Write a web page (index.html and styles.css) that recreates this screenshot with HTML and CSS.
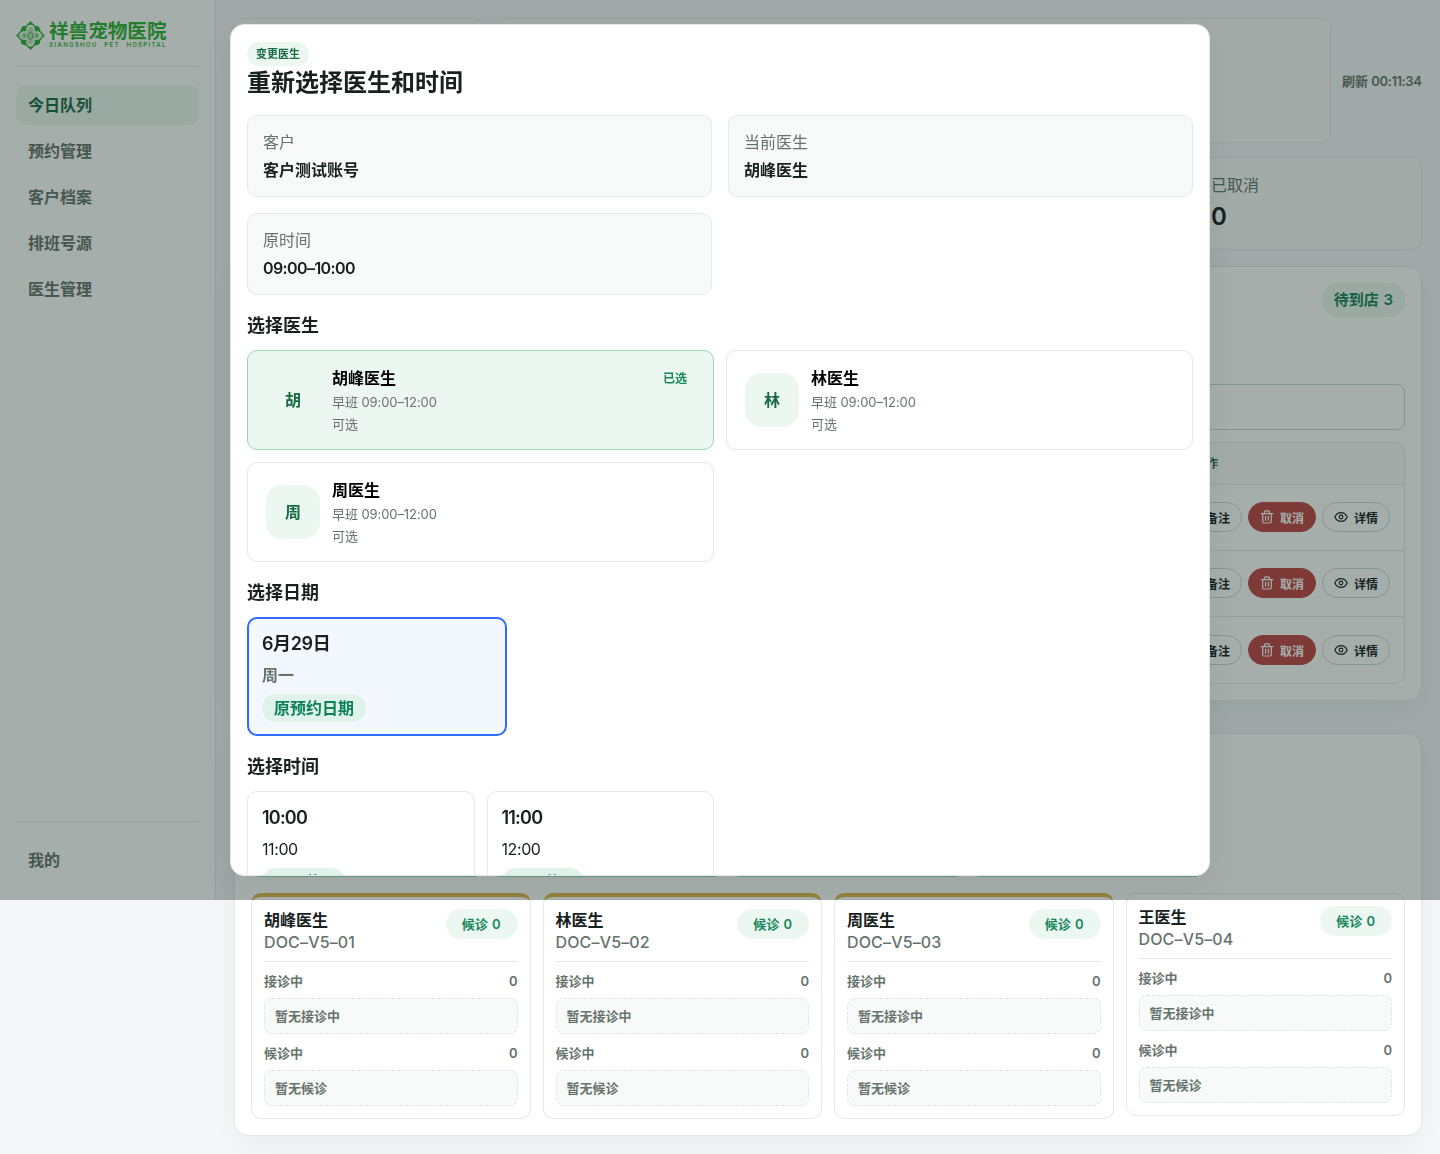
FILE: index.html
```html
<!DOCTYPE html>
<html lang="zh-CN">
<head>
    <meta charset="UTF-8">
    <meta name="viewport" content="width=device-width, initial-scale=1.0">
    <title>今日队列</title>
    <link rel="stylesheet" href="styles.css">
</head>
<body>
    <!-- Shared icons -->
    <svg class="icon-defs" width="0" height="0">
        <symbol id="icon-trash" viewBox="0 0 14 14">
            <path d="M1.200 3.600h11.600M4.500 3.400V1.900a1 1 0 0 1 1-1h3a1 1 0 0 1 1 1v1.500M2.700 3.800v7.700a1.500 1.500 0 0 0 1.500 1.500h5.600a1.500 1.500 0 0 0 1.500-1.500V3.800M5.600 6.200v4M8.400 6.200v4"/>
        </symbol>
        <symbol id="icon-eye" viewBox="0 0 14 14">
            <path d="M.9 7C2 4.200 4.200 2.600 7 2.600S12 4.200 13.100 7C12 9.800 9.800 11.400 7 11.400S2 9.800.9 7z"/>
            <circle cx="7" cy="7" r="1.800"/>
        </symbol>
    </svg>

    <div class="app">
        <aside class="sidebar">
            <div class="brand">
                <svg class="brand-mark" viewBox="0 0 28 28">
                    <path d="M14 0 L18.500 4.500 Q23.500 4.500 23.500 9.500 L28 14 L23.500 18.500 Q23.500 23.500 18.500 23.500 L14 28 L9.500 23.500 Q4.500 23.500 4.500 18.500 L0 14 L4.500 9.500 Q4.500 4.500 9.500 4.500 Z" fill="#2eb135"/>
                    <path d="M10 10V7.500a4 4 0 0 1 8 0V10h2.500a4 4 0 0 1 0 8H18v2.500a4 4 0 0 1-8 0V18H7.500a4 4 0 0 1 0-8z" fill="#fff"/>
                    <path d="M11.200 11.200V8a2.800 2.800 0 0 1 5.600 0v3.200H20a2.800 2.800 0 0 1 0 5.600h-3.200V20a2.800 2.800 0 0 1-5.600 0v-3.200H8a2.800 2.800 0 0 1 0-5.600z" fill="#b9dfbb"/>
                    <path d="M14 10.500c-2.800 2-2.800 5.500 0 7.500 2.800-2 2.800-5.500 0-7.500zM8 12.500v3M20 12.500v3" fill="none" stroke="#2eb135" stroke-width=".9"/>
                    <path d="M3.500 12l-1.500 2 1.500 2M24.500 12l1.500 2-1.500 2" fill="none" stroke="#fff" stroke-width=".6"/>
                </svg>
                <div class="brand-text">
                    <div class="brand-name">祥兽宠物医院</div>
                    <div class="brand-sub">XIANGSHOU PET HOSPITAL</div>
                </div>
            </div>
            <nav class="nav">
                <a class="nav-item active">今日队列</a>
                <a class="nav-item">预约管理</a>
                <a class="nav-item">客户档案</a>
                <a class="nav-item">排班号源</a>
                <a class="nav-item">医生管理</a>
            </nav>
            <div class="sidebar-footer">
                <a class="nav-item">我的</a>
            </div>
        </aside>

        <main class="main">
            <div class="topbar">
                <div class="top-card top-title"></div>
                <div class="top-card top-info"></div>
                <div class="refresh">刷新 <span>00:11:34</span></div>
            </div>

            <div class="stats">
                <div class="stat"></div>
                <div class="stat"></div>
                <div class="stat"></div>
                <div class="stat"></div>
                <div class="stat">
                    <span>已取消</span>
                    <strong>0</strong>
                </div>
            </div>

            <section class="panel queue-panel">
                <div class="panel-head">
                    <span class="pill">待到店 3</span>
                </div>
                <div class="search"></div>
                <div class="table">
                    <div class="table-head">操作</div>
                    <div class="table-row">
                        <button class="btn">备注</button>
                        <button class="btn danger"><svg><use href="#icon-trash"/></svg>取消</button>
                        <button class="btn"><svg><use href="#icon-eye"/></svg>详情</button>
                    </div>
                    <div class="table-row">
                        <button class="btn">备注</button>
                        <button class="btn danger"><svg><use href="#icon-trash"/></svg>取消</button>
                        <button class="btn"><svg><use href="#icon-eye"/></svg>详情</button>
                    </div>
                    <div class="table-row">
                        <button class="btn">备注</button>
                        <button class="btn danger"><svg><use href="#icon-trash"/></svg>取消</button>
                        <button class="btn"><svg><use href="#icon-eye"/></svg>详情</button>
                    </div>
                </div>
            </section>

            <section class="panel doctor-panel">
                <div class="doctor-grid" id="doctor-grid"></div>
            </section>
        </main>
    </div>

    <!-- Change doctor dialog -->
    <div class="overlay">
        <div class="modal">
            <span class="tag">变更医生</span>
            <h2>重新选择医生和时间</h2>
            <div class="info-grid">
                <div class="info"><span>客户</span><strong>客户测试账号</strong></div>
                <div class="info"><span>当前医生</span><strong>胡峰医生</strong></div>
                <div class="info"><span>原时间</span><strong class="time">09:00–10:00</strong></div>
            </div>

            <h3>选择医生</h3>
            <div class="choice-grid">
                <div class="choice selected">
                    <div class="avatar">胡</div>
                    <div class="choice-text">
                        <strong>胡峰医生</strong>
                        <span>早班 09:00–12:00</span>
                        <span>可选</span>
                    </div>
                    <div class="chosen">已选</div>
                </div>
                <div class="choice">
                    <div class="avatar">林</div>
                    <div class="choice-text">
                        <strong>林医生</strong>
                        <span>早班 09:00–12:00</span>
                        <span>可选</span>
                    </div>
                </div>
                <div class="choice">
                    <div class="avatar">周</div>
                    <div class="choice-text">
                        <strong>周医生</strong>
                        <span>早班 09:00–12:00</span>
                        <span>可选</span>
                    </div>
                </div>
            </div>

            <h3>选择日期</h3>
            <div class="date-card">
                <strong>6月29日</strong>
                <span class="weekday">周一</span>
                <span class="badge">原预约日期</span>
            </div>

            <h3>选择时间</h3>
            <div class="slot-grid">
                <div class="slot">
                    <strong>10:00</strong>
                    <span>11:00</span>
                    <span class="badge">可预约 1</span>
                </div>
                <div class="slot">
                    <strong>11:00</strong>
                    <span>12:00</span>
                    <span class="badge">可预约 1</span>
                </div>
            </div>
        </div>
        <div class="modal-edge"><i></i><i></i><i></i><i></i></div>
    </div>

    <script>
        const doctorGrid = document.getElementById('doctor-grid');

        const doctors = [
            { name: '胡峰医生', code: 'DOC–V5–01', onDuty: true },
            { name: '林医生', code: 'DOC–V5–02', onDuty: true },
            { name: '周医生', code: 'DOC–V5–03', onDuty: true },
            { name: '王医生', code: 'DOC–V5–04', onDuty: false }
        ];

        doctors.forEach((doctor) => {
            const card = document.createElement('div');
            card.classList.add('doctor-card');
            if (doctor.onDuty) {
                card.classList.add('on-duty');
            }
            card.innerHTML = `
                <div class="doctor-head">
                    <div class="doctor-name">
                        <strong>${doctor.name}</strong>
                        <span>${doctor.code}</span>
                    </div>
                    <span class="waiting">候诊 0</span>
                </div>
                <div class="count-row"><span>接诊中</span><span>0</span></div>
                <div class="empty">暂无接诊中</div>
                <div class="count-row"><span>候诊中</span><span>0</span></div>
                <div class="empty">暂无候诊</div>
            `;
            doctorGrid.appendChild(card);
        });
    </script>
</body>
</html>
```

FILE: styles.css
```css
* {
    box-sizing: border-box;
}
body {
    margin: 0;
    height: 1154px;
    overflow: hidden;
    background: #f5f7f9;
    color: #17211d;
    font-family: Inter, "Noto Sans CJK SC", sans-serif;
    font-size: 16px;
    line-height: 22px;
}
strong {
    font-weight: 600;
}
.icon-defs {
    position: absolute;
}
.app {
    display: flex;
    align-items: flex-start;
}

/* Sidebar */
.sidebar {
    width: 216px;
    height: 900px;
    flex: none;
    padding: 18px 16px 20px;
    background: #fff;
    border-right: 1px solid #e4e8e6;
    display: flex;
    flex-direction: column;
}
.brand {
    display: flex;
    gap: 4px;
    height: 49px;
    padding-top: 3px;
    border-bottom: 1px solid #e4e8e6;
    color: #2eb135;
}
.brand-mark {
    width: 29px;
    height: 29px;
}
.brand-name {
    font-size: 19.6px;
    line-height: 20px;
    font-weight: 600;
    white-space: nowrap;
}
.brand-sub {
    font-size: 6px;
    line-height: 7px;
    font-weight: 600;
    letter-spacing: 1.3px;
    word-spacing: 4px;
    white-space: nowrap;
}
.nav {
    display: flex;
    flex-direction: column;
    gap: 6px;
    margin-top: 18px;
}
.nav-item {
    height: 40px;
    padding: 0 12px;
    border-radius: 10px;
    line-height: 40px;
    font-weight: 600;
    color: #66736d;
}
.nav-item.active {
    background: #edf7f2;
    color: #166b43;
}
.sidebar-footer {
    display: flex;
    flex-direction: column;
    margin-top: auto;
    padding-top: 18px;
    border-top: 1px solid #e4e8e6;
}

/* Main page */
.main {
    flex: 1;
    padding: 18px 18px 0;
}
.topbar {
    display: flex;
    align-items: center;
}
.top-card {
    height: 125px;
    background: #f8faf9;
    border: 1px solid #e4e8e6;
    border-radius: 10px;
}
.top-title {
    width: 249px;
}
.top-info {
    flex: 1;
    margin-left: 14px;
}
.refresh {
    width: 80px;
    margin-left: 11px;
    font-size: 13px;
    font-weight: 600;
    white-space: nowrap;
    color: #66736d;
}
.refresh span {
    letter-spacing: -0.4px;
}
.stats {
    display: grid;
    grid-template-columns: repeat(5, 1fr);
    gap: 12px;
    margin-top: 14px;
}
.stat {
    height: 93px;
    padding: 16px;
    background: #f8faf9;
    border: 1px solid #e4e8e6;
    border-radius: 10px;
    display: flex;
    flex-direction: column;
    gap: 6px;
    color: #66736d;
}
.stat strong {
    font-size: 24px;
    line-height: 30px;
    color: #17211d;
}
.panel {
    background: #fff;
    border: 1px solid #e4e8e6;
    border-radius: 14px;
    padding: 16px;
    box-shadow: 0 10px 30px rgba(20, 40, 30, 0.05);
}
.queue-panel {
    margin-top: 16px;
    height: 435px;
}
.panel-head {
    display: flex;
    justify-content: flex-end;
    align-items: flex-start;
    height: 101px;
}
.pill {
    padding: 0 12px;
    border-radius: 17px;
    background: #edf7f2;
    color: #16875a;
    font-size: 15px;
    line-height: 34px;
    font-weight: 600;
    word-spacing: 1px;
}
.search {
    height: 46px;
    border: 1px solid #cbd5d0;
    border-radius: 8px;
}
.table {
    margin-top: 12px;
    border: 1px solid #e4e8e6;
    border-radius: 10px;
    overflow: hidden;
}
.table-head {
    height: 41px;
    padding-right: 186px;
    background: #f8faf9;
    font-size: 12px;
    line-height: 41px;
    font-weight: 600;
    text-align: right;
    color: #355f50;
}
.table-row {
    display: flex;
    justify-content: flex-end;
    align-items: center;
    gap: 6px;
    height: 66px;
    padding: 0 14px 1px 0;
    border-top: 1px solid #e4e8e6;
}
.table-row:last-child {
    height: 67px;
    padding-bottom: 0;
}
.btn {
    display: flex;
    align-items: center;
    gap: 6px;
    height: 30px;
    padding: 0 11px;
    border: 1px solid #cbd5d0;
    border-radius: 15px;
    background: #fff;
    color: #17211d;
    font-family: inherit;
    font-size: 12px;
    font-weight: 700;
}
.btn.danger {
    background: #bd4545;
    border-color: #bd4545;
    color: #fff;
}
.btn svg {
    width: 14px;
    height: 14px;
    fill: none;
    stroke: currentColor;
    stroke-width: 1.2;
    stroke-linecap: round;
    stroke-linejoin: round;
}

/* Doctor board */
.doctor-panel {
    margin-top: 32px;
    height: 403px;
    padding-top: 159px;
}
.doctor-grid {
    display: grid;
    grid-template-columns: repeat(4, 1fr);
    align-items: start;
    gap: 12px;
}
.doctor-card {
    padding: 12px;
    border: 1px solid #e4e8e6;
    border-radius: 10px;
}
.doctor-card.on-duty {
    border-top: 4px solid #e0b64f;
}
.doctor-head {
    display: flex;
    justify-content: space-between;
    align-items: flex-start;
    padding-bottom: 8px;
    border-bottom: 1px solid #e4e8e6;
}
.doctor-name {
    display: flex;
    flex-direction: column;
}
.doctor-name span {
    font-weight: 500;
    letter-spacing: 0.15px;
    color: #66736d;
}
.waiting {
    padding: 0 17px 0 16px;
    border-radius: 15px;
    background: #edf7f2;
    color: #16875a;
    font-size: 13px;
    line-height: 30px;
    font-weight: 600;
    word-spacing: 1px;
}
.count-row {
    display: flex;
    justify-content: space-between;
    margin: 9px 0 7px;
    font-size: 13px;
    line-height: 20px;
    font-weight: 600;
    color: #66736d;
}
.empty {
    height: 36px;
    padding: 0 10px;
    border: 1px dashed #dfe6e2;
    border-radius: 8px;
    background: #f8faf9;
    font-size: 13px;
    line-height: 34px;
    font-weight: 600;
    color: #66736d;
}

/* Dialog */
.overlay {
    position: fixed;
    top: 0;
    left: 0;
    width: 100%;
    height: 900px;
    overflow: hidden;
    padding-top: 24px;
    background: rgba(20, 42, 34, 0.38);
    display: flex;
    flex-direction: column;
    align-items: center;
}
.modal {
    width: 980px;
    height: 852px;
    flex: none;
    overflow: hidden;
    padding: 17px 16px 0;
    background: #fff;
    border: 1px solid #e4e8e6;
    border-radius: 14px;
    box-shadow: 0 10px 30px rgba(20, 40, 30, 0.06);
}
.modal-edge {
    display: grid;
    grid-template-columns: repeat(4, 1fr);
    gap: 20px;
    width: 940px;
    margin-left: 14px;
}
.modal-edge i {
    height: 1px;
    background: #639581;
}
.tag {
    display: block;
    width: 62px;
    border-radius: 12px;
    background: #edf7f2;
    color: #166b43;
    font-size: 11px;
    line-height: 24px;
    font-weight: 600;
    text-align: center;
}
h2 {
    margin: 0;
    padding-top: 1px;
    font-size: 24px;
    line-height: 32px;
    font-weight: 600;
}
h3 {
    margin: 18px 0 12px;
    font-size: 18px;
    line-height: 25px;
    font-weight: 600;
}
.info-grid {
    display: grid;
    grid-template-columns: 1fr 1fr;
    gap: 16px;
    margin-top: 16px;
}
.info {
    display: flex;
    flex-direction: column;
    gap: 6px;
    height: 82px;
    padding: 15px;
    border: 1px solid #e4e8e6;
    border-radius: 10px;
    background: #f8faf9;
}
.info span {
    color: #66736d;
}
.time {
    letter-spacing: -0.6px;
}
.choice-grid {
    display: grid;
    grid-template-columns: 1fr 1fr;
    gap: 12px;
}
.choice {
    display: flex;
    align-items: center;
    gap: 12px;
    height: 100px;
    padding: 0 18px;
    border: 1px solid #e4e8e6;
    border-radius: 10px;
    color: #000;
}
.choice.selected {
    background: #edf7f2;
    border-color: #9dd3b9;
}
.avatar {
    width: 54px;
    height: 54px;
    border-radius: 16px;
    background: #edf7f2;
    color: #166b43;
    line-height: 54px;
    font-weight: 600;
    text-align: center;
}
.choice-text {
    flex: 1;
    display: flex;
    flex-direction: column;
}
.choice-text strong {
    padding-bottom: 1px;
    margin-top: 1px;
    line-height: 24px;
}
.choice-text span {
    font-size: 13px;
    letter-spacing: -0.08px;
    color: #66736d;
}
.chosen {
    align-self: flex-start;
    padding: 17px 8px 0 0;
    color: #16875a;
    font-size: 12px;
    font-weight: 600;
}
.date-card {
    width: 260px;
    height: 119px;
    padding: 12px 13px;
    border: 2px solid #2f6bff;
    border-radius: 10px;
    background: #f3f8ff;
}
.date-card strong,
.slot strong {
    display: block;
    font-size: 18px;
    line-height: 26px;
    letter-spacing: -0.4px;
}
.slot strong {
    letter-spacing: -0.8px;
}
.weekday {
    display: block;
    margin: 7px 0 8px;
    line-height: 22px;
    font-weight: 600;
    color: #66736d;
}
.badge {
    display: inline-block;
    padding: 0 12px;
    border-radius: 14px;
    background: #e0f3ea;
    color: #0d805a;
    line-height: 28px;
    font-weight: 600;
}
.slot-grid {
    display: grid;
    grid-template-columns: repeat(4, 1fr);
    gap: 12px;
}
.slot {
    height: 120px;
    padding: 13px 14px;
    border: 1px solid #e4e8e6;
    border-radius: 10px;
}
.slot > span:not(.badge) {
    display: block;
    margin: 7px 0 8px;
    letter-spacing: -0.4px;
}
```
